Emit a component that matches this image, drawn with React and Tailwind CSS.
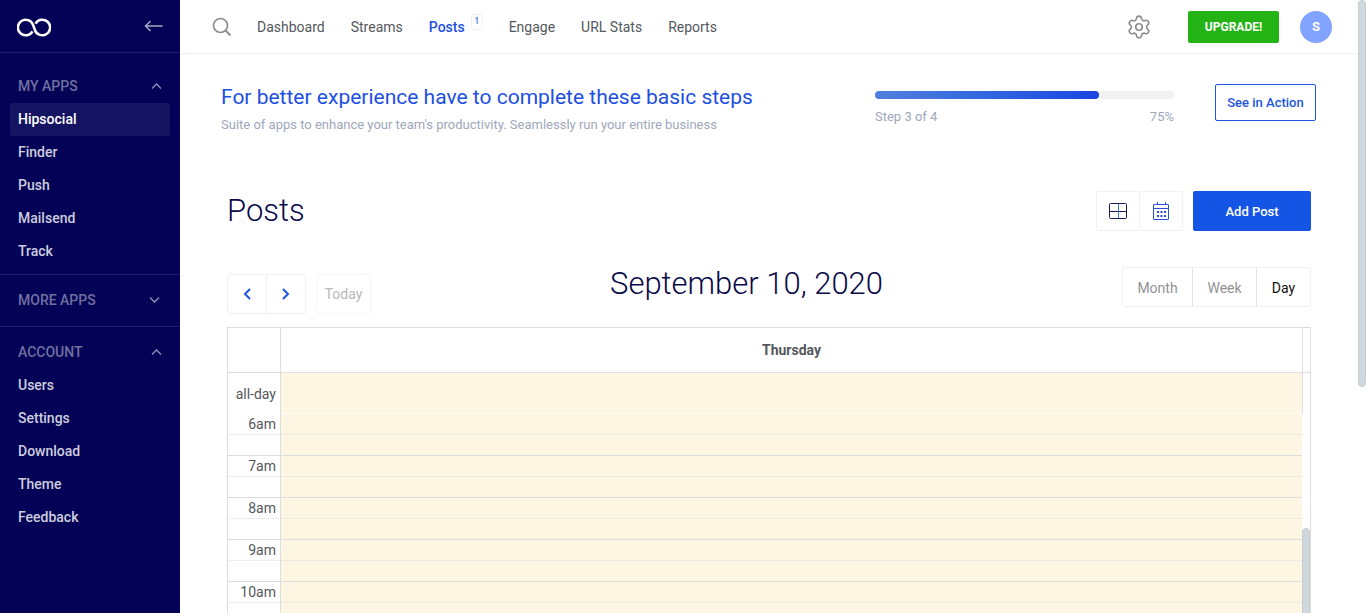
import React from "react";
import { Settings } from "lucide-react";

const myApps = ["Hipsocial", "Finder", "Push", "Mailsend", "Track"];
const account = ["Users", "Settings", "Download", "Theme", "Feedback"];
const hours = ["6am", "7am", "8am", "9am", "10am"];

function Chevron({ up }) {
  return (
    <svg width="11" height="8" viewBox="0 0 11 8" fill="none" stroke="currentColor" strokeWidth="1.3">
      <path d={up ? "M1 6.5 5.5 2 10 6.5" : "M1 1.5 5.5 6 10 1.5"} />
    </svg>
  );
}

function Section({ title, items = [], open, className }) {
  return (
    <section className={className}>
      <button
        type="button"
        aria-expanded={!!open}
        className={
          "flex h-[33px] w-full items-center justify-between pb-0.5 pl-[18px] text-sm font-medium text-[#7070a0] " +
          (open ? "pr-[18px]" : "pr-5")
        }
      >
        {title}
        <span className="text-[#9292b8]">
          <Chevron up={open} />
        </span>
      </button>
      {items.length > 0 && (
        <ul className="px-2.5">
          {items.map((name) => (
            <li key={name}>
              <a
                href="#"
                className={
                  "flex h-[33px] items-center rounded-xs px-2 pb-0.5 text-sm font-medium " +
                  (name === "Hipsocial" ? "bg-[#141463] text-white" : "text-[#cdcddd]")
                }
              >
                {name}
              </a>
            </li>
          ))}
        </ul>
      )}
    </section>
  );
}

function Logo() {
  return (
    <svg className="mt-0.5" width="34" height="19" viewBox="0 0 34 19" fill="none" stroke="#fff" strokeWidth="2.5">
      <path d="M15.500 13.300A7.800 7.800 0 1 1 16 6.800L18 12.200A7.800 7.800 0 1 0 18.500 5.700" />
    </svg>
  );
}

function CalendarIcon() {
  return (
    <svg width="17" height="19" viewBox="0 0 17 19" fill="none" stroke="#2a4de0">
      <rect x=".5" y="2.500" width="15" height="15" rx=".5" />
      <path d="M1 6.500h15M4.500 0v3M12.500 0v3" />
      <path d="M4 10h2M7.500 10h2M11 10h2M4 14h2M7.500 14h2M11 14h2" strokeWidth="2" />
    </svg>
  );
}

function Header() {
  const link = "text-sm text-[#54585c]";
  return (
    <header className="flex h-[54px] shrink-0 items-center border-b border-[#f0f0f0] pl-8 pr-[26px]">
      <button type="button" aria-label="Search">
        <svg width="20" height="20" viewBox="0 0 20 20" fill="none" stroke="#8f8f8f" strokeWidth="1.7">
          <circle cx="8.500" cy="8.500" r="7" />
          <path d="m13.500 13.500 5 5" strokeWidth="2" />
        </svg>
      </button>
      <nav className="ml-[25px] flex items-center gap-[26px]">
        <a href="#" className={link}>Dashboard</a>
        <a href="#" className={link}>Streams</a>
        <a href="#" className="flex items-center gap-1.5 text-sm font-medium text-[#1d4fe0]">
          Posts
          <span className="mb-2.5 flex h-4 w-3 items-center justify-center rounded-sm border border-[#f0f0f0] text-[9px] font-normal">
            1
          </span>
        </a>
        <a href="#" className={link}>Engage</a>
        <a href="#" className={link}>URL Stats</a>
        <a href="#" className={link}>Reports</a>
      </nav>
      <div className="ml-auto flex items-center">
        <button type="button" aria-label="Settings">
          <Settings size={26} strokeWidth={1.5} color="#8d8d8d" />
        </button>
        <button type="button" className="ml-9 h-8 w-[91px] rounded-xs bg-[#24b314] text-xs font-bold text-white">
          UPGRADE!
        </button>
        <button type="button" aria-label="Account" className="ml-[21px] size-8 rounded-full bg-[#82a3ff] text-[13px] font-bold text-white">
          S
        </button>
      </div>
    </header>
  );
}

function Banner() {
  return (
    <section className="flex items-start pl-[41px] pr-[42px] pt-[30px]">
      <div className="min-w-0 flex-1">
        <h2 className="text-[21px] leading-[26px] text-[#1d4fe0]">
          For better experience have to complete these basic steps
        </h2>
        <p className="mt-1.5 text-[13px] leading-[18px] text-[#9ea7bb]">
          Suite of apps to enhance your team's productivity. Seamlessly run your entire business
        </p>
      </div>
      <div className="mr-[41px] w-[299px] pt-[7px]">
        <div role="progressbar" aria-label="Setup progress" aria-valuenow={75} className="h-2 rounded-full bg-[#f1f1f1]">
          <div className="h-2 w-3/4 rounded-full bg-linear-to-r from-[#5080dc] to-[#1b44e2]" />
        </div>
        <div className="mt-[9px] flex justify-between text-[13px] leading-[18px] text-[#9ea7bb]">
          <span>Step 3 of 4</span>
          <span>75%</span>
        </div>
      </div>
      <button type="button" className="h-[37px] w-[101px] rounded-xs border border-[#1d55e0] text-[13px] font-medium text-[#1d55e0]">
        See in Action
      </button>
    </section>
  );
}

function Calendar() {
  return (
    <div className="mt-[13px] flex border-x border-t border-[#dddddd]">
      <table className="grid min-w-0 flex-1 text-sm leading-[18px] text-[#54585c]">
        <thead className="grid">
          <tr className="flex h-[45px]">
            <td className="w-[53px] border-r border-b border-[#dddddd]" />
            <th scope="col" className="flex flex-1 items-center justify-center border-b border-[#dddddd] font-bold">
              Thursday
            </th>
          </tr>
        </thead>
        <tbody className="grid">
          <tr className="flex h-[41px]">
            <th scope="row" className="flex w-[53px] items-center justify-end border-r border-[#dddddd] pr-1 font-normal">
              all-day
            </th>
            <td className="flex-1 border-b border-white bg-[#fdf6e3]" />
          </tr>
          {hours.map((h) => (
            <React.Fragment key={h}>
              <tr className="flex h-[21px]">
                <th scope="row" className="flex w-[53px] items-center justify-end border-r border-b border-[#dddddd] [border-bottom-style:dotted] pr-1 font-normal">
                  {h}
                </th>
                <td className="flex-1 border-b border-dotted border-[#dddddd] bg-[#fdf6e3]" />
              </tr>
              <tr className="flex h-[21px]">
                <td className="w-[53px] border-r border-b border-[#dddddd]" />
                <td className="flex-1 border-b border-[#dddddd] bg-[#fdf6e3]" />
              </tr>
            </React.Fragment>
          ))}
        </tbody>
      </table>
      <div className="flex w-2 flex-col">
        <div className="h-[45px] border-b border-l border-[#dddddd]" />
        <div className="h-[41px] border-l border-[#dddddd]" />
        <div className="mt-[114px] flex-1 rounded-t-full border border-[#c8cccf] bg-[#cfd8dc]" />
      </div>
    </div>
  );
}

export default function App() {
  return (
    <div className="flex h-screen overflow-hidden bg-white font-[Roboto,sans-serif]">
      <aside className="w-[180px] shrink-0 overflow-hidden bg-[#030256]">
        <div className="flex h-[53px] items-center justify-between border-b border-[#1f1e68] px-[17px]">
          <Logo />
          <button type="button" aria-label="Collapse sidebar">
            <svg width="19" height="12" viewBox="0 0 19 12" fill="none" stroke="#aaaac8" strokeWidth="1.4">
              <path d="M18.500 6H1.500M6.500 1l-5 5 5 5" />
            </svg>
          </button>
        </div>
        <Section title="MY APPS" items={myApps} open className="border-b border-[#1f1e68] pt-[17px] pb-[6px]" />
        <Section title="MORE APPS" className="border-b border-[#1f1e68] py-[9px]" />
        <Section title="ACCOUNT" items={account} open className="pt-[9px]" />
      </aside>

      <div className="flex min-w-0 flex-1 flex-col overflow-hidden">
        <Header />
        <Banner />
        <main className="px-[47px] pt-[57px]">
          <div className="flex h-10 items-center">
            <h1 className="mr-auto text-[31px] font-light text-[#0b0a4a]">Posts</h1>
            <button type="button" aria-label="Grid view" className="flex h-10 w-11 items-center justify-center rounded-xs border border-[#f0f0f0]">
              <svg width="18" height="16" viewBox="0 0 18 16" fill="none" stroke="#1b1858">
                <rect x=".5" y=".5" width="17" height="15" rx="1" />
                <path d="M1 8.500h16" />
                <path d="M9.500 1v14" stroke="#4977c8" />
              </svg>
            </button>
            <button type="button" aria-label="Calendar view" className="flex h-10 w-[43px] items-center justify-center rounded-xs border border-l-0 border-[#f0f0f0]">
              <CalendarIcon />
            </button>
            <button type="button" className="ml-2.5 h-10 w-[118px] rounded-xs bg-[#1555e6] pt-0.5 text-[13px] font-medium text-white">
              Add Post
            </button>
          </div>

          <div className="mt-9 flex h-[47px] items-start justify-between">
            <div className="flex self-end text-sm">
              <button type="button" aria-label="Previous day" className="flex h-10 w-10 items-center justify-center rounded-l border border-[#f0f0f0]">
                <svg width="8" height="12" viewBox="0 0 8 12" fill="none" stroke="#1d55e6" strokeWidth="2"><path d="M7 1 2 6l5 5" /></svg>
              </button>
              <button type="button" aria-label="Next day" className="flex h-10 w-[39px] items-center justify-center rounded-r border border-l-0 border-[#f0f0f0]">
                <svg width="8" height="12" viewBox="0 0 8 12" fill="none" stroke="#1d55e6" strokeWidth="2"><path d="m1 1 5 5-5 5" /></svg>
              </button>
              <button type="button" disabled className="ml-2.5 h-10 w-[55px] rounded border border-[#f7f7f7] text-[#b8b8b8]">
                Today
              </button>
            </div>
            <h2 className="text-[31px] leading-[34px] font-light text-[#0b0a4a]">September 10, 2020</h2>
            <div className="flex pt-0 text-sm text-[#909295]">
              <button type="button" className="h-10 w-[71px] rounded-l border border-[#f0f0f0] border-r-[#e4e4e4] pt-0.5">Month</button>
              <button type="button" className="h-10 w-16 border border-l-0 border-[#f0f0f0] border-r-[#e4e4e4] pt-0.5">Week</button>
              <button type="button" className="h-10 w-[54px] rounded-r border border-l-0 border-[#f0f0f0] pt-0.5 text-[#111]">Day</button>
            </div>
          </div>
          <Calendar />
        </main>
      </div>

      <div className="w-2 shrink-0">
        <div className="h-[387px] rounded-full border border-[#c8cccf] bg-[#cfd8dc]" />
      </div>
    </div>
  );
}
